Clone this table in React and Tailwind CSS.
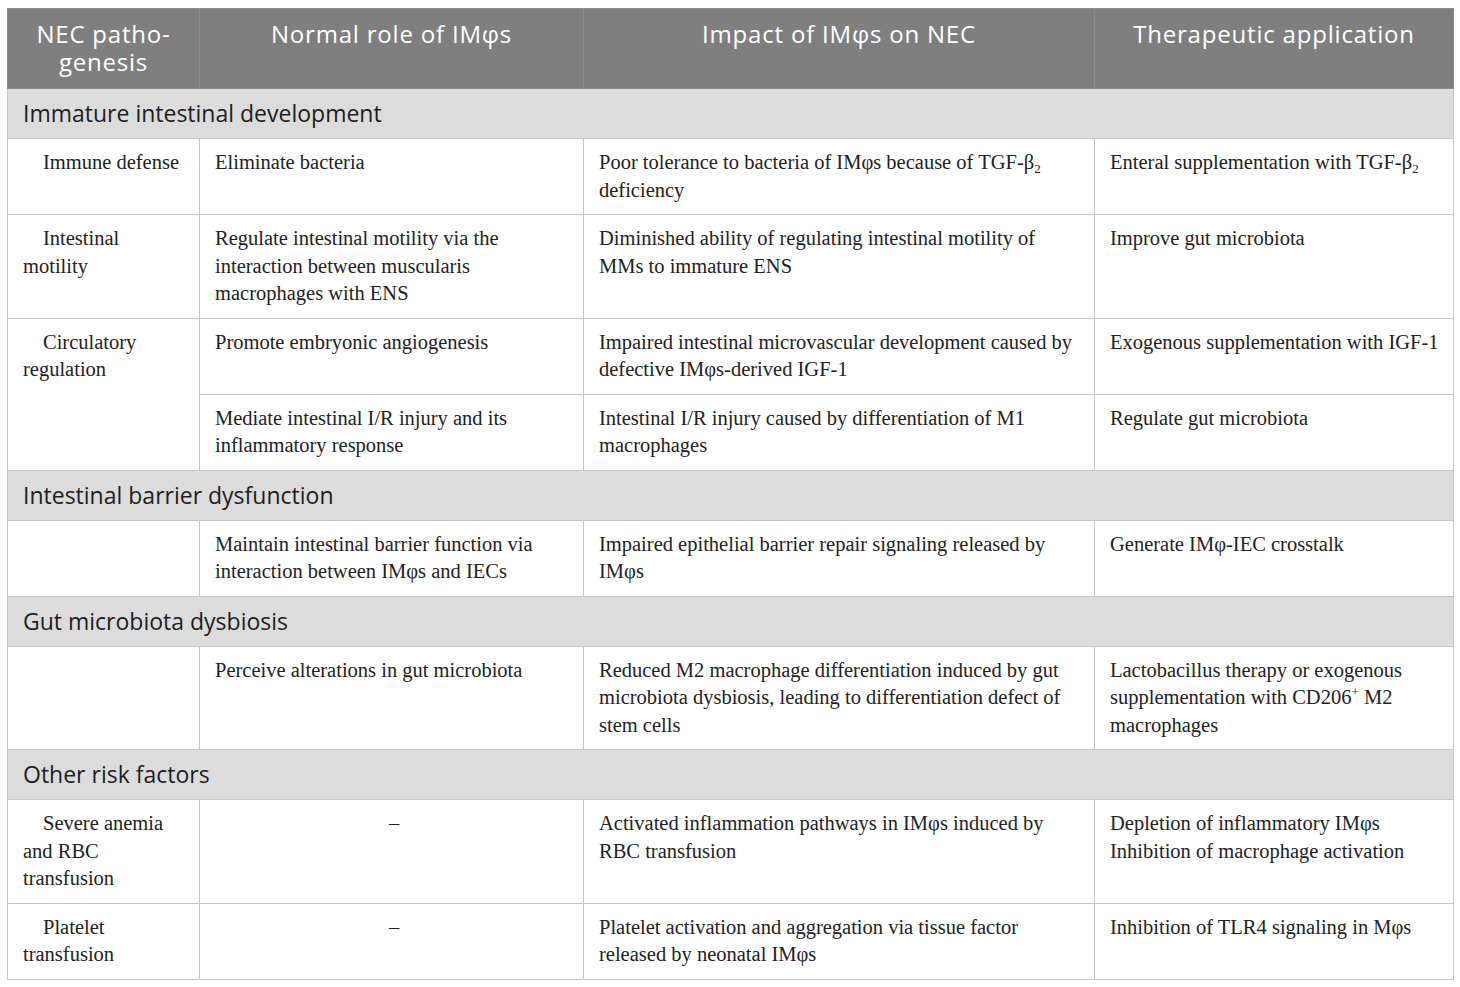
const serif = { fontFamily: '"Liberation Serif", "Times New Roman", serif' };

function Section({ title }) {
  return (
    <tr className="bg-[#dcdcdc]">
      <td
        colSpan={4}
        className="h-[50px] border border-[#c6c6c6] px-[15px] text-[23px] text-[#1e1e1e] font-['Open_Sans',sans-serif] align-middle"
      >
        {title}
      </td>
    </tr>
  );
}

function Cell({ children, first, center, rowSpan }) {
  return (
    <td
      rowSpan={rowSpan}
      className={
        "border border-[#c6c6c6] pl-[15px] pr-[10px] pt-[10px] pb-[10px] align-top text-[20.5px] leading-[27.5px] text-[#222] " +
        (first ? "indent-[20px] " : "") +
        (center ? "text-center" : "")
      }
      style={serif}
    >
      {children}
    </td>
  );
}

const B2 = (
  <>
    TGF-β<sub className="text-[13px] align-baseline relative top-[4px]">2</sub>
  </>
);

export default function App() {
  return (
    <div className="bg-white min-h-[987px] pt-[8px] px-[7px]">
      <table className="table-fixed border-collapse w-[1446px]">
        <colgroup>
          <col className="w-[192px]" />
          <col className="w-[384px]" />
          <col className="w-[511px]" />
          <col className="w-[359px]" />
        </colgroup>
        <thead>
          <tr className="bg-[#7f7f7f] text-white text-[24px] leading-[28px] tracking-[0.8px] font-['Open_Sans',sans-serif]">
            <th className="h-[80px] border border-[#8c8c8c] px-[8px] pt-[11px] pb-[11px] align-top font-normal">
              NEC patho-
              <br />
              genesis
            </th>
            <th className="border border-[#8c8c8c] px-[8px] pt-[11px] align-top font-normal">Normal role of IMφs</th>
            <th className="border border-[#8c8c8c] px-[8px] pt-[11px] align-top font-normal">Impact of IMφs on NEC</th>
            <th className="border border-[#8c8c8c] px-[8px] pt-[11px] align-top font-normal">Therapeutic application</th>
          </tr>
        </thead>
        <tbody>
          <Section title="Immature intestinal development" />
          <tr>
            <Cell first>Immune defense</Cell>
            <Cell>Eliminate bacteria</Cell>
            <Cell>Poor tolerance to bacteria of IMφs because of {B2} deficiency</Cell>
            <Cell>Enteral supplementation with {B2}</Cell>
          </tr>
          <tr>
            <Cell first>Intestinal motility</Cell>
            <Cell>Regulate intestinal motility via the interaction between muscularis macrophages with ENS</Cell>
            <Cell>Diminished ability of regulating intestinal motility of MMs to immature ENS</Cell>
            <Cell>Improve gut microbiota</Cell>
          </tr>
          <tr>
            <Cell first rowSpan={2}>Circulatory regulation</Cell>
            <Cell>Promote embryonic angiogenesis</Cell>
            <Cell>Impaired intestinal microvascular development caused by defective IMφs-derived IGF-1</Cell>
            <Cell>Exogenous supplementation with IGF-1</Cell>
          </tr>
          <tr>
            <Cell>Mediate intestinal I/R injury and its inflammatory response</Cell>
            <Cell>Intestinal I/R injury caused by differentiation of M1 macrophages</Cell>
            <Cell>Regulate gut microbiota</Cell>
          </tr>
          <Section title="Intestinal barrier dysfunction" />
          <tr>
            <Cell first></Cell>
            <Cell>Maintain intestinal barrier function via interaction between IMφs and IECs</Cell>
            <Cell>Impaired epithelial barrier repair signaling released by IMφs</Cell>
            <Cell>Generate IMφ-IEC crosstalk</Cell>
          </tr>
          <Section title="Gut microbiota dysbiosis" />
          <tr>
            <Cell first></Cell>
            <Cell>Perceive alterations in gut microbiota</Cell>
            <Cell>
              Reduced M2 macrophage differentiation induced by gut microbiota dysbiosis, leading to differentiation defect of stem cells
            </Cell>
            <Cell>
              Lactobacillus therapy or exogenous supplementation with CD206
              <sup className="text-[13px] align-baseline relative top-[-8px]">+</sup> M2 macrophages
            </Cell>
          </tr>
          <Section title="Other risk factors" />
          <tr>
            <Cell first>Severe anemia and RBC transfusion</Cell>
            <Cell center>–</Cell>
            <Cell>Activated inflammation pathways in IMφs induced by RBC transfusion</Cell>
            <Cell>
              Depletion of inflammatory IMφs
              <br />
              Inhibition of macrophage activation
            </Cell>
          </tr>
          <tr>
            <Cell first>Platelet transfusion</Cell>
            <Cell center>–</Cell>
            <Cell>Platelet activation and aggregation via tissue factor released by neonatal IMφs</Cell>
            <Cell>Inhibition of TLR4 signaling in Mφs</Cell>
          </tr>
        </tbody>
      </table>
    </div>
  );
}
